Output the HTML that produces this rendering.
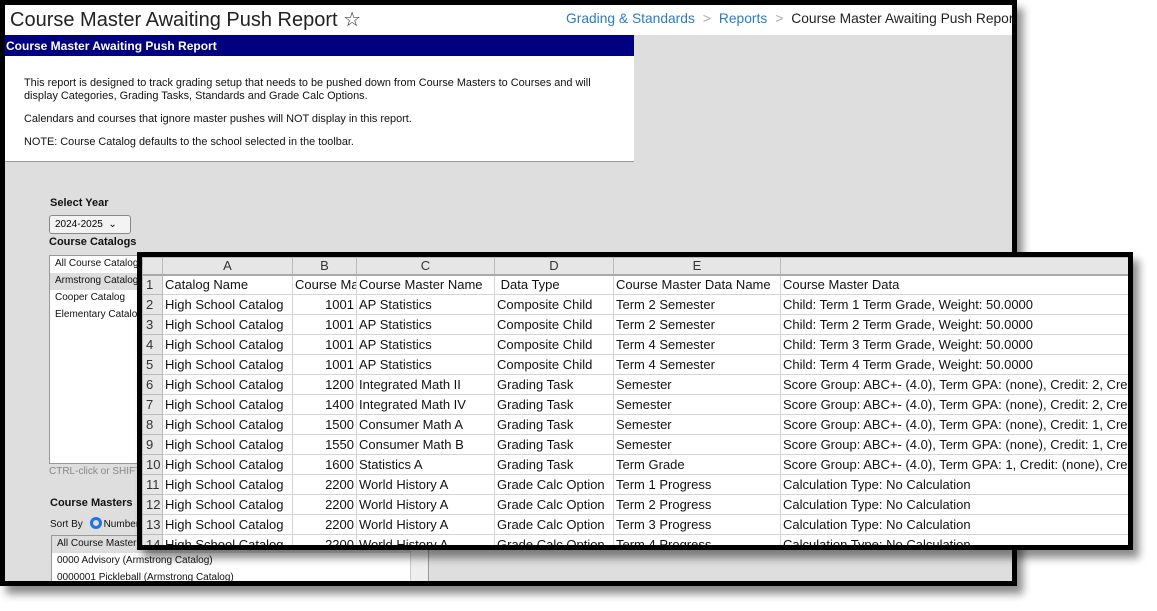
<!DOCTYPE html>
<html><head><style>
*{margin:0;padding:0;box-sizing:border-box}
body{width:1157px;height:611px;background:#fff;position:relative;overflow:hidden;font-family:"Liberation Sans",Arial,sans-serif}
.win{position:absolute;left:0;top:0;width:1017px;height:586px;border:5px solid #000;background:#dedede;box-shadow:6px 8px 8px rgba(0,0,0,.45);overflow:hidden}
.hdr{position:absolute;left:0;top:0;width:1007px;height:30px;background:#fff}
.title{position:absolute;left:5px;top:2px;font-size:20px;color:#222}
.crumb{position:absolute;left:561px;top:6px;font-size:13.8px;color:#2b7cc4;white-space:nowrap}
.crumb span.g{color:#aaa;margin:0 8px}
.crumb span.k{color:#222}
.bar{position:absolute;left:0;top:30px;width:629px;height:21px;background:#000080;color:#fff;font-weight:bold;font-size:12px;padding:4px 0 0 1px}
.desc{position:absolute;left:0;top:51px;width:629px;height:106px;background:#fff;border-bottom:1px solid #999;font-size:10.9px;color:#111;padding:21px 0 0 19px;line-height:13px}
.desc p{margin-bottom:10px}
.lbl{position:absolute;font-size:11px;font-weight:bold;color:#111}
.sel{position:absolute;left:44px;top:210px;width:82px;height:19px;border:1px solid #888;border-radius:3px;background:#f3f3f3;font-size:10px;padding:3px 0 0 5px}
.lb{position:absolute;background:#fff;border:1px solid #999;font-size:10px;color:#111}
.lb div{height:17px;padding:2px 0 0 5px;white-space:nowrap;overflow:hidden}
.ss{position:absolute;left:137px;top:252px;width:996px;height:298px;border:5px solid #000;background:#fff;box-shadow:6px 8px 8px rgba(0,0,0,.45);overflow:hidden}
table{border-collapse:collapse;font-size:13px;color:#111;table-layout:fixed;width:998px}
td{height:20px;border:1px solid #d4d4d4;white-space:nowrap;overflow:hidden;padding:0 2px;line-height:18px}
tr.h td{height:17px;background:#e6e6e6;text-align:center;color:#333;font-size:13px;line-height:15px;border-color:#bbb;border-bottom:2px solid #aaa}
td.n{background:#e6e6e6;color:#333;text-align:left;padding-left:3px;border-color:#bbb}
td.r{text-align:right}
</style></head><body>
<div class="win">
 <div class="hdr">
  <div class="title">Course Master Awaiting Push Report ☆</div>
  <div class="crumb">Grading &amp; Standards<span class="g">&gt;</span>Reports<span class="g">&gt;</span><span class="k">Course Master Awaiting Push Report</span></div>
 </div>
 <div class="bar">Course Master Awaiting Push Report</div>
 <div class="desc">
  <p>This report is designed to track grading setup that needs to be pushed down from Course Masters to Courses and will<br>display Categories, Grading Tasks, Standards and Grade Calc Options.</p>
  <p>Calendars and courses that ignore master pushes will NOT display in this report.</p>
  <p>NOTE: Course Catalog defaults to the school selected in the toolbar.</p>
 </div>
 <div class="lbl" style="left:45px;top:192px">Select Year</div>
 <div class="sel">2024-2025 &nbsp;⌄</div>
 <div class="lbl" style="left:44px;top:231px">Course Catalogs</div>
 <div class="lb" style="left:44px;top:250px;width:100px;height:209px">
  <div>All Course Catalogs</div><div style="background:#ddd">Armstrong Catalog</div><div>Cooper Catalog</div><div>Elementary Catalog</div>
 </div>
 <div style="position:absolute;left:44px;top:461px;font-size:10px;color:#888">CTRL-click or SHIFT</div>
 <div class="lbl" style="left:45px;top:492px">Course Masters</div>
 <div style="position:absolute;left:45px;top:512px;font-size:10px;color:#111">Sort By <span style="display:inline-block;width:12px;height:12px;border:3px solid #1a73e8;border-radius:50%;vertical-align:-2px;margin:0 2px 0 4px"></span>Number</div>
 <div class="lb" style="left:46px;top:530px;width:378px;height:60px">
  <div style="background:#ddd">All Course Masters</div><div>0000 Advisory (Armstrong Catalog)</div><div>0000001 Pickleball (Armstrong Catalog)</div>
  <span style="position:absolute;right:0;top:0;width:18px;height:60px;background:#eee;border-left:1px solid #ccc"></span>
 </div>
</div>
<div class="ss">
<table>
<colgroup><col style="width:20px"><col style="width:130px"><col style="width:64px"><col style="width:138px"><col style="width:119px"><col style="width:167px"><col style="width:360px"></colgroup>
<tr class="h"><td style="background:#e6e6e6"></td><td>A</td><td>B</td><td>C</td><td>D</td><td>E</td><td></td></tr>
<tr><td class="n">1</td><td>Catalog Name</td><td>Course Master Number</td><td>Course Master Name</td><td>&nbsp;Data Type</td><td>Course Master Data Name</td><td>Course Master Data</td></tr>
<tr><td class="n">2</td><td>High School Catalog</td><td class="r">1001</td><td>AP Statistics</td><td>Composite Child</td><td>Term 2 Semester</td><td>Child: Term 1 Term Grade, Weight: 50.0000</td></tr>
<tr><td class="n">3</td><td>High School Catalog</td><td class="r">1001</td><td>AP Statistics</td><td>Composite Child</td><td>Term 2 Semester</td><td>Child: Term 2 Term Grade, Weight: 50.0000</td></tr>
<tr><td class="n">4</td><td>High School Catalog</td><td class="r">1001</td><td>AP Statistics</td><td>Composite Child</td><td>Term 4 Semester</td><td>Child: Term 3 Term Grade, Weight: 50.0000</td></tr>
<tr><td class="n">5</td><td>High School Catalog</td><td class="r">1001</td><td>AP Statistics</td><td>Composite Child</td><td>Term 4 Semester</td><td>Child: Term 4 Term Grade, Weight: 50.0000</td></tr>
<tr><td class="n">6</td><td>High School Catalog</td><td class="r">1200</td><td>Integrated Math II</td><td>Grading Task</td><td>Semester</td><td>Score Group: ABC+- (4.0), Term GPA: (none), Credit: 2, Credit</td></tr>
<tr><td class="n">7</td><td>High School Catalog</td><td class="r">1400</td><td>Integrated Math IV</td><td>Grading Task</td><td>Semester</td><td>Score Group: ABC+- (4.0), Term GPA: (none), Credit: 2, Credit</td></tr>
<tr><td class="n">8</td><td>High School Catalog</td><td class="r">1500</td><td>Consumer Math A</td><td>Grading Task</td><td>Semester</td><td>Score Group: ABC+- (4.0), Term GPA: (none), Credit: 1, Credit</td></tr>
<tr><td class="n">9</td><td>High School Catalog</td><td class="r">1550</td><td>Consumer Math B</td><td>Grading Task</td><td>Semester</td><td>Score Group: ABC+- (4.0), Term GPA: (none), Credit: 1, Credit</td></tr>
<tr><td class="n">10</td><td>High School Catalog</td><td class="r">1600</td><td>Statistics A</td><td>Grading Task</td><td>Term Grade</td><td>Score Group: ABC+- (4.0), Term GPA: 1, Credit: (none), Credit</td></tr>
<tr><td class="n">11</td><td>High School Catalog</td><td class="r">2200</td><td>World History A</td><td>Grade Calc Option</td><td>Term 1 Progress</td><td>Calculation Type: No Calculation</td></tr>
<tr><td class="n">12</td><td>High School Catalog</td><td class="r">2200</td><td>World History A</td><td>Grade Calc Option</td><td>Term 2 Progress</td><td>Calculation Type: No Calculation</td></tr>
<tr><td class="n">13</td><td>High School Catalog</td><td class="r">2200</td><td>World History A</td><td>Grade Calc Option</td><td>Term 3 Progress</td><td>Calculation Type: No Calculation</td></tr>
<tr><td class="n">14</td><td>High School Catalog</td><td class="r">2200</td><td>World History A</td><td>Grade Calc Option</td><td>Term 4 Progress</td><td>Calculation Type: No Calculation</td></tr>
</table>
</div>
</body></html>
